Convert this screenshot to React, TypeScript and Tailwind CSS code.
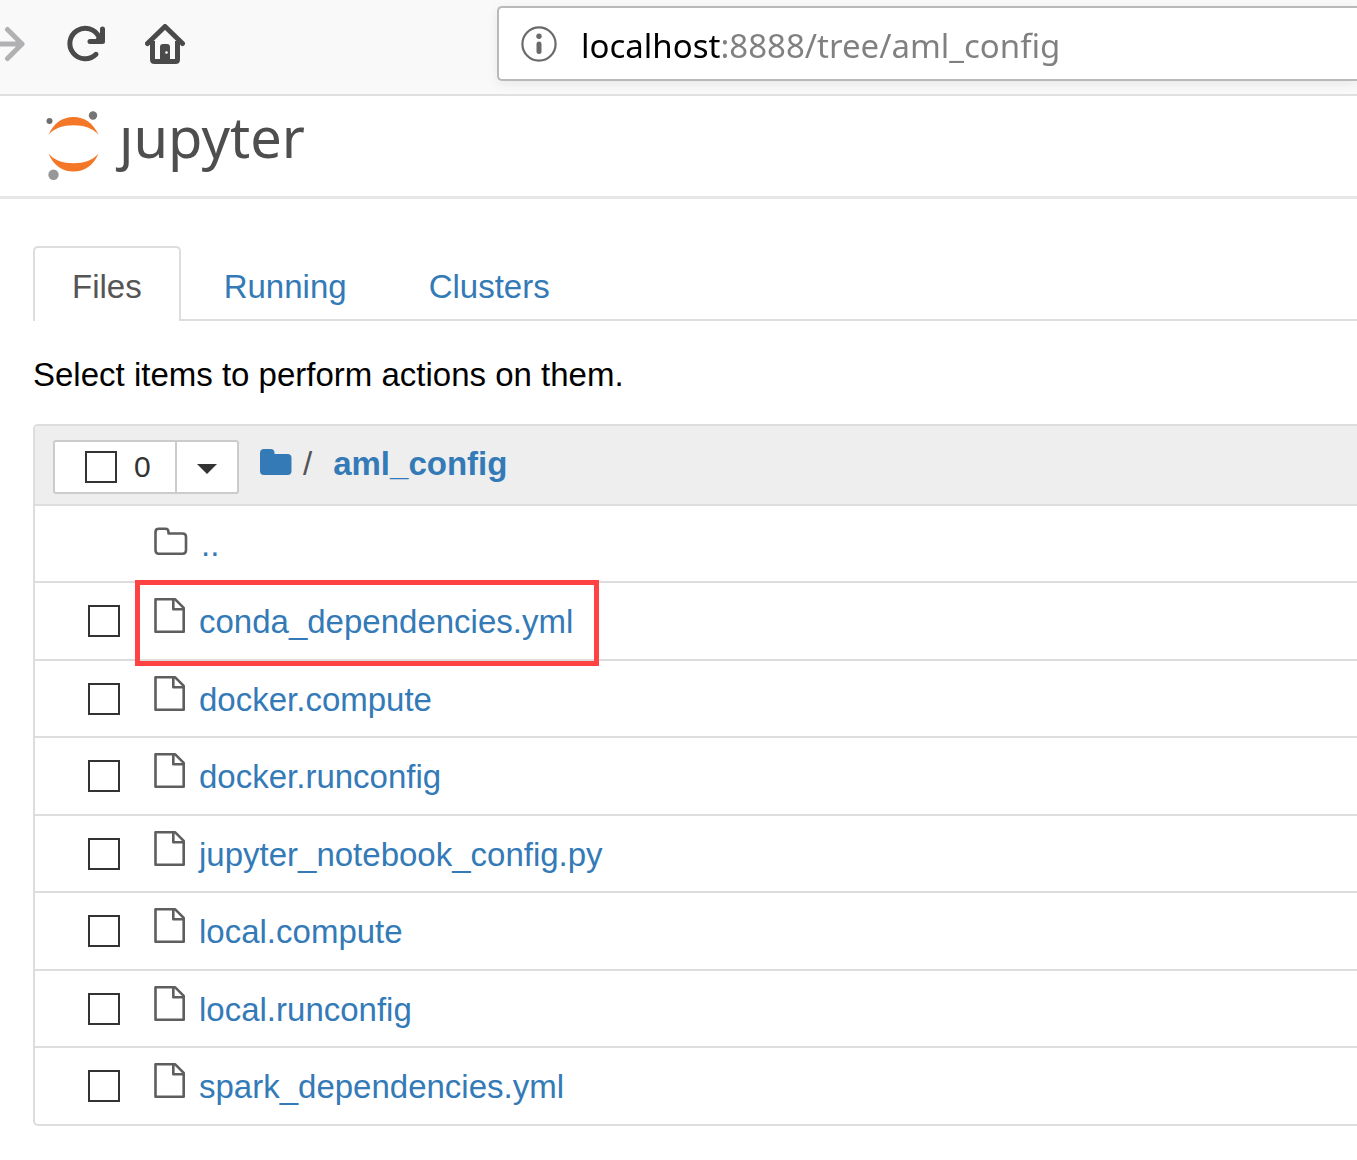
import React, { useState } from "react";

const files = [
  "conda_dependencies.yml",
  "docker.compute",
  "docker.runconfig",
  "jupyter_notebook_config.py",
  "local.compute",
  "local.runconfig",
  "spark_dependencies.yml",
];

const box =
  "size-8 shrink-0 appearance-none border-2 border-[#333] bg-white checked:bg-[#337ab7]";
const link = "text-[#337ab7] hover:underline";

function ForwardIcon() {
  return (
    <svg width="26" height="40" viewBox="0 0 26 40" fill="none" stroke="#b1b1b3" strokeWidth="5" strokeLinecap="round" strokeLinejoin="round" aria-hidden="true">
      <path d="M-4 20H22M7.500 5.500L22 20L7.500 34.500" />
    </svg>
  );
}

function ReloadIcon() {
  return (
    <svg width="40" height="40" viewBox="0 0 40 40" fill="none" stroke="#4a4a4b" strokeWidth="5" strokeLinecap="round" strokeLinejoin="round" aria-hidden="true">
      <path d="M30 30.300A15.300 15.300 0 1 1 33 13" />
      <path d="M36.500 5V17.500H24" />
      <path d="M36 9V17.500H29Z" fill="#4a4a4b" strokeWidth="2" />
    </svg>
  );
}

function HomeIcon() {
  return (
    <svg width="40" height="40" viewBox="0 0 40 40" fill="none" aria-hidden="true">
      <path d="M2.500 19.500L20 2.500L37.500 19.500" stroke="#4a4a4b" strokeWidth="5" strokeLinecap="round" strokeLinejoin="round" />
      <path d="M7.500 17V35.500Q7.500 37.500 9.500 37.500H30.500Q32.500 37.500 32.500 35.500V17" stroke="#4a4a4b" strokeWidth="5" />
      <path d="M15 37V23Q15 20 18 20H22Q25 20 25 23V37Z" fill="#4a4a4b" />
      <circle cx="21.500" cy="28.500" r="1.300" fill="#fff" />
    </svg>
  );
}

function InfoIcon() {
  return (
    <svg width="36" height="36" viewBox="0 0 36 36" aria-hidden="true">
      <circle cx="18" cy="18" r="16.600" fill="none" stroke="#6a6a6a" strokeWidth="2.200" />
      <circle cx="18" cy="10.300" r="2.700" fill="#6a6a6a" />
      <rect x="15.500" y="15.500" width="5" height="12.500" rx="2.500" fill="#6a6a6a" />
    </svg>
  );
}

function JupyterMark() {
  return (
    <svg width="54" height="70" viewBox="0 0 54 70" aria-hidden="true">
      <path d="M2.500 24C7.500 12 16.500 6 27.500 6S47.500 12 52.500 24C47 17.300 38 14.300 27.500 14.300S8 17.300 2.500 24Z" fill="#f37726" />
      <path d="M2.500 42.500C7.500 54.500 16.500 60.500 27.500 60.500S47.500 54.500 52.500 42.500C47 49.300 38 52.200 27.500 52.200S8 49.300 2.500 42.500Z" fill="#f37726" />
      <circle cx="3.500" cy="10" r="3" fill="#6f6f70" />
      <circle cx="47" cy="4.500" r="4.200" fill="#767677" />
      <circle cx="7.500" cy="63.700" r="5.200" fill="#989798" />
    </svg>
  );
}

function FileIcon() {
  return (
    <svg width="34" height="36" viewBox="0 0 34 36" className="shrink-0" fill="none" stroke="#5e5e5e" strokeWidth="2.600" strokeLinejoin="round" aria-hidden="true">
      <path d="M1.500 1.300H21.200L29.700 9.800V33.700H1.500Z" />
      <path d="M19.300 1.500V11.300H29.700" />
    </svg>
  );
}

function FolderOutlineIcon() {
  return (
    <svg width="34" height="36" viewBox="0 0 34 36" className="shrink-0" fill="none" stroke="#5e5e5e" strokeWidth="2.600" strokeLinejoin="round" aria-hidden="true">
      <path d="M1.500 11Q1.500 7.700 4.800 7.700H11.500Q14.500 7.700 14.500 11V12.500H28.500Q32 12.500 32 15.800V29.200Q32 32.700 28.500 32.700H4.800Q1.500 32.700 1.500 29.200Z" />
    </svg>
  );
}

function FolderIcon() {
  return (
    <svg width="32" height="26" viewBox="0 0 32 26" fill="#337ab7" aria-hidden="true">
      <path d="M0 4Q0 0 4 0H10.500Q14.500 0 14.500 4V5H27.500Q31.500 5 31.500 9V22Q31.500 26 27.500 26H4Q0 26 0 22Z" />
    </svg>
  );
}

export default function App() {
  const [url, setUrl] = useState("localhost:8888/tree/aml_config");
  return (
    <div className="min-h-screen overflow-hidden bg-white font-['Liberation_Sans',Arial,sans-serif] text-[33px] leading-[47px] text-black">
      <header className="flex h-24 items-start border-b-2 border-[#e0e0e1] bg-[#f9f9fa] pt-1.5">
        <div className="flex h-[76px] items-center">
          <button type="button" aria-label="Forward"><ForwardIcon /></button>
          <button type="button" aria-label="Reload" className="ml-10"><ReloadIcon /></button>
          <button type="button" aria-label="Home" className="ml-[39px]"><HomeIcon /></button>
        </div>
        <div className="ml-[312px] flex h-[75px] flex-1 items-center rounded-l-[5px] border-2 border-r-0 border-[#b9b9ba] bg-white pl-[22px] shadow-[0_3px_12px_rgba(0,0,0,0.07)]">
          <InfoIcon />
          <input
            type="text"
            aria-label="Address"
            value={url}
            onChange={(e) => setUrl(e.target.value)}
            className="ml-6 h-15 min-w-0 flex-1 bg-linear-to-r from-black from-[139px] to-[#808080] to-[139px] bg-clip-text pt-1 font-['Noto_Sans',sans-serif] text-[33px] text-transparent caret-black outline-none"
          />
        </div>
      </header>

      <div className="flex h-[103px] items-start border-b-3 border-[#e7e7e7] pt-[15px] pl-[46px]">
        <a href="#tree" aria-label="Jupyter" className="flex items-start">
          <JupyterMark />
          <span className="ml-[19px] font-['Noto_Sans',sans-serif] text-[56px] leading-[50px] text-[#4e4e4e]">ȷupyter</span>
        </a>
      </div>

      <main className="pt-[47px] pl-[33px]">
        <nav className="flex h-[75px] gap-1" aria-label="Sections">
          <a href="#files" className="rounded-t-[5px] border-2 border-b-0 border-[#ddd] px-[37px] pt-[15px] text-[#555]">Files</a>
          <div className="-ml-1 flex flex-1 gap-1 border-b-2 border-[#ddd] pl-1">
            <a href="#running" className="px-[39px] pt-[17px] text-[#337ab7]">Running</a>
            <a href="#clusters" className="px-[39px] pt-[17px] text-[#337ab7]">Clusters</a>
          </div>
        </nav>

        <p className="mt-[30px]">Select items to perform actions on them.</p>

        <section className="mt-[26px] rounded-l-[5px] border-2 border-r-0 border-[#ddd]">
          <div className="flex h-20 items-start border-b-2 border-[#ddd] bg-[#eee] pt-3.5 pl-[18px]">
            <div className="flex h-[54px] rounded-[3px] border-2 border-[#ccc] bg-white text-[30px] text-[#333]">
              <label className="flex w-[120px] items-center gap-[17px] pl-[30px]">
                <input type="checkbox" aria-label="Select all" className={box} />
                <span className="pb-0.5">0</span>
              </label>
              <button type="button" aria-label="Selection menu" className="flex w-[62px] items-center justify-center border-l-2 border-[#ccc] pt-1">
                <svg width="20" height="10" viewBox="0 0 20 10" fill="#333" aria-hidden="true"><path d="M0 0H20L10 10Z" /></svg>
              </button>
            </div>
            <nav className="ml-5 flex items-start font-bold" aria-label="Breadcrumb">
              <a href="#root" aria-label="Root folder" className="mt-[9px] ml-px"><FolderIcon /></a>
              <span className="ml-[11px] font-normal text-[#555]">/</span>
              <a href="#aml_config" className={"ml-[21px] " + link}>aml_config</a>
            </nav>
          </div>

          <ul>
            <li className="flex h-[77px] items-start border-b-2 border-[#ddd] pt-[15px] pl-[119px]">
              <FolderOutlineIcon />
              <a href="#up" className={"ml-[13px] " + link}>..</a>
            </li>
            {files.map((name, i) => (
              <li key={name} className="relative flex items-start border-b-2 border-[#ddd] pt-[15px] pl-[53px] last:border-b-0 odd:h-[77px] even:not-last:h-[78px] last:h-[76px]">
                <input type="checkbox" aria-label={"Select " + name} className={"mt-[7px] mr-[34px] " + box} />
                <FileIcon />
                <a href={"#" + name} className={"ml-[11px] " + link}>{name}</a>
                {i === 0 && (
                  <span className="pointer-events-none absolute -top-[3px] left-[100px] h-[86px] w-[464px] border-5 border-[#ff4343]" />
                )}
              </li>
            ))}
          </ul>
        </section>
      </main>
    </div>
  );
}
